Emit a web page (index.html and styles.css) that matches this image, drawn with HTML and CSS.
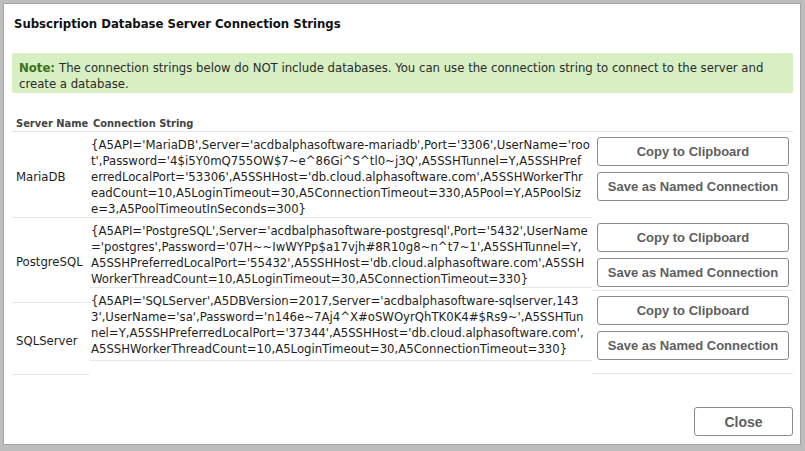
FILE: index.html
```html
<!DOCTYPE html>
<html>
<head>
<meta charset="utf-8">
<title>Subscription Database Server Connection Strings</title>
<link rel="stylesheet" href="styles.css">
</head>
<body>
<div class="dialog">
  <div class="title">Subscription Database Server Connection Strings</div>
  <div class="body">
    <div class="note"><b class="note-label">Note:</b>The connection strings below do NOT include databases. You can use the connection string to connect to the server and create a database.</div>
    <div class="head">
      <div class="hname">Server Name</div>
      <div class="hconn">Connection String</div>
    </div>
    <div class="grid">
      <div class="col col-name">
        <div class="ncell n1">MariaDB</div>
        <div class="ncell n2">PostgreSQL</div>
        <div class="ncell n3">SQLServer</div>
      </div>
      <div class="col col-conn">
        <div class="ccell">
          <span class="ln">{A5API='MariaDB',Server='acdbalphasoftware-mariadb',Port='3306',UserName='roo</span>
          <span class="ln">t',Password='4$i5Y0mQ755OW$7~e^86Gi^S^tl0~j3Q',A5SSHTunnel=Y,A5SSHPref</span>
          <span class="ln">erredLocalPort='53306',A5SSHHost='db.cloud.alphasoftware.com',A5SSHWorkerThr</span>
          <span class="ln">eadCount=10,A5LoginTimeout=30,A5ConnectionTimeout=330,A5Pool=Y,A5PoolSiz</span>
          <span class="ln">e=3,A5PoolTimeoutInSeconds=300}</span>
        </div>
        <div class="ccell">
          <span class="ln">{A5API='PostgreSQL',Server='acdbalphasoftware-postgresql',Port='5432',UserName</span>
          <span class="ln">='postgres',Password='07H~~IwWYPp$a17vjh#8R10g8~n^t7~1',A5SSHTunnel=Y,</span>
          <span class="ln">A5SSHPreferredLocalPort='55432',A5SSHHost='db.cloud.alphasoftware.com',A5SSH</span>
          <span class="ln">WorkerThreadCount=10,A5LoginTimeout=30,A5ConnectionTimeout=330}</span>
        </div>
        <div class="ccell c3">
          <span class="ln">{A5API='SQLServer',A5DBVersion=2017,Server='acdbalphasoftware-sqlserver,143</span>
          <span class="ln">3',UserName='sa',Password='n146e~7Aj4^X#oSWOyrQhTK0K4#$Rs9~',A5SSHTun</span>
          <span class="ln">nel=Y,A5SSHPreferredLocalPort='37344',A5SSHHost='db.cloud.alphasoftware.com',</span>
          <span class="ln">A5SSHWorkerThreadCount=10,A5LoginTimeout=30,A5ConnectionTimeout=330}</span>
        </div>
      </div>
      <div class="col col-btn">
        <div class="bcell b1">
          <button class="btn">Copy to Clipboard</button>
          <button class="btn">Save as Named Connection</button>
        </div>
        <div class="bcell b2">
          <button class="btn">Copy to Clipboard</button>
          <button class="btn">Save as Named Connection</button>
        </div>
        <div class="bcell b3">
          <button class="btn">Copy to Clipboard</button>
          <button class="btn">Save as Named Connection</button>
        </div>
      </div>
    </div>
  </div>
  <div class="footer">
    <button class="btn close">Close</button>
  </div>
</div>
</body>
</html>
```

FILE: styles.css
```css
html, body {
  margin: 0;
  padding: 0;
}
body {
  background: #bdbdbd;
  width: 805px;
  height: 451px;
  overflow: hidden;
  font-family: Tahoma, "DejaVu Sans Condensed", "DejaVu Sans", sans-serif;
  font-stretch: condensed;
  color: #1e1e1e;
}
.dialog {
  box-sizing: border-box;
  margin: 3px 0 0 3px;
  width: 798px;
  height: 442px;
  background: #fff;
  border: 1px solid #a4a4a4;
  display: flex;
  flex-direction: column;
}
.title {
  padding: 11px 0 0 10px;
  height: 39px;
  box-sizing: border-box;
  font-size: 13px;
  line-height: 17px;
  font-weight: bold;
  color: #111;
}
.body {
  padding: 10px 7px 0 8px;
  flex: 1;
}
.note {
  background: #d7efc3;
  border-radius: 2px;
  padding: 7px 7px 1px 7px;
  font-size: 13px;
  line-height: 16px;
  color: #2a2a2a;
  height: 32px;
}
.note-label {
  color: #3d6e1c;
  margin-right: 4px;
}
.head {
  display: flex;
  height: 39px;
  box-sizing: border-box;
  align-items: flex-end;
  padding-bottom: 0;
  border-bottom: 1px solid #e4e4e4;
  font-size: 11px;
  line-height: 14px;
  font-weight: bold;
  color: #444;
}
.hname {
  width: 77px;
  padding-left: 4px;
  box-sizing: border-box;
}
.hconn {
  padding-left: 4px;
}
.grid {
  display: flex;
  align-items: flex-start;
}
.col {
  display: flex;
  flex-direction: column;
}
.col-name {
  width: 78px;
}
.ncell {
  display: flex;
  align-items: center;
  padding: 3px 0 0 4px;
  border-bottom: 1px solid #e8e8e8;
  font-size: 13px;
  color: #1e1e1e;
}
.n1 { height: 82px; }
.n2 { height: 81px; }
.n3 { height: 68px; }
.col-conn {
  width: 502px;
}
.ccell {
  padding: 5px 0 0 1px;
  border-bottom: 1px solid #e8e8e8;
  font-size: 13px;
  line-height: 16px;
  color: #1e1e1e;
}
.c3 {
  padding-bottom: 3px;
}
.ln {
  display: block;
  white-space: nowrap;
}
.col-btn {
  width: 201px;
}
.bcell {
  display: flex;
  flex-direction: column;
  gap: 6px;
  padding: 5px 4px 0 5px;
  box-sizing: border-box;
  border-bottom: 1px solid #e8e8e8;
}
.b1 { height: 86px; border-bottom-color: transparent; }
.b2 { height: 73px; }
.b3 { height: 83px; }
.btn {
  font-family: "Liberation Sans", Arial, sans-serif;
  font-stretch: normal;
  font-weight: bold;
  font-size: 13px;
  color: #5e5e5e;
  background: #fff;
  border: 1px solid #8c8c8c;
  border-radius: 3px;
  height: 29px;
  width: 192px;
  padding: 0;
  cursor: pointer;
}
.footer {
  display: flex;
  justify-content: flex-end;
  padding: 0 7px 8px 0;
}
.close {
  width: 99px;
  height: 29px;
  font-size: 14px;
}
```
